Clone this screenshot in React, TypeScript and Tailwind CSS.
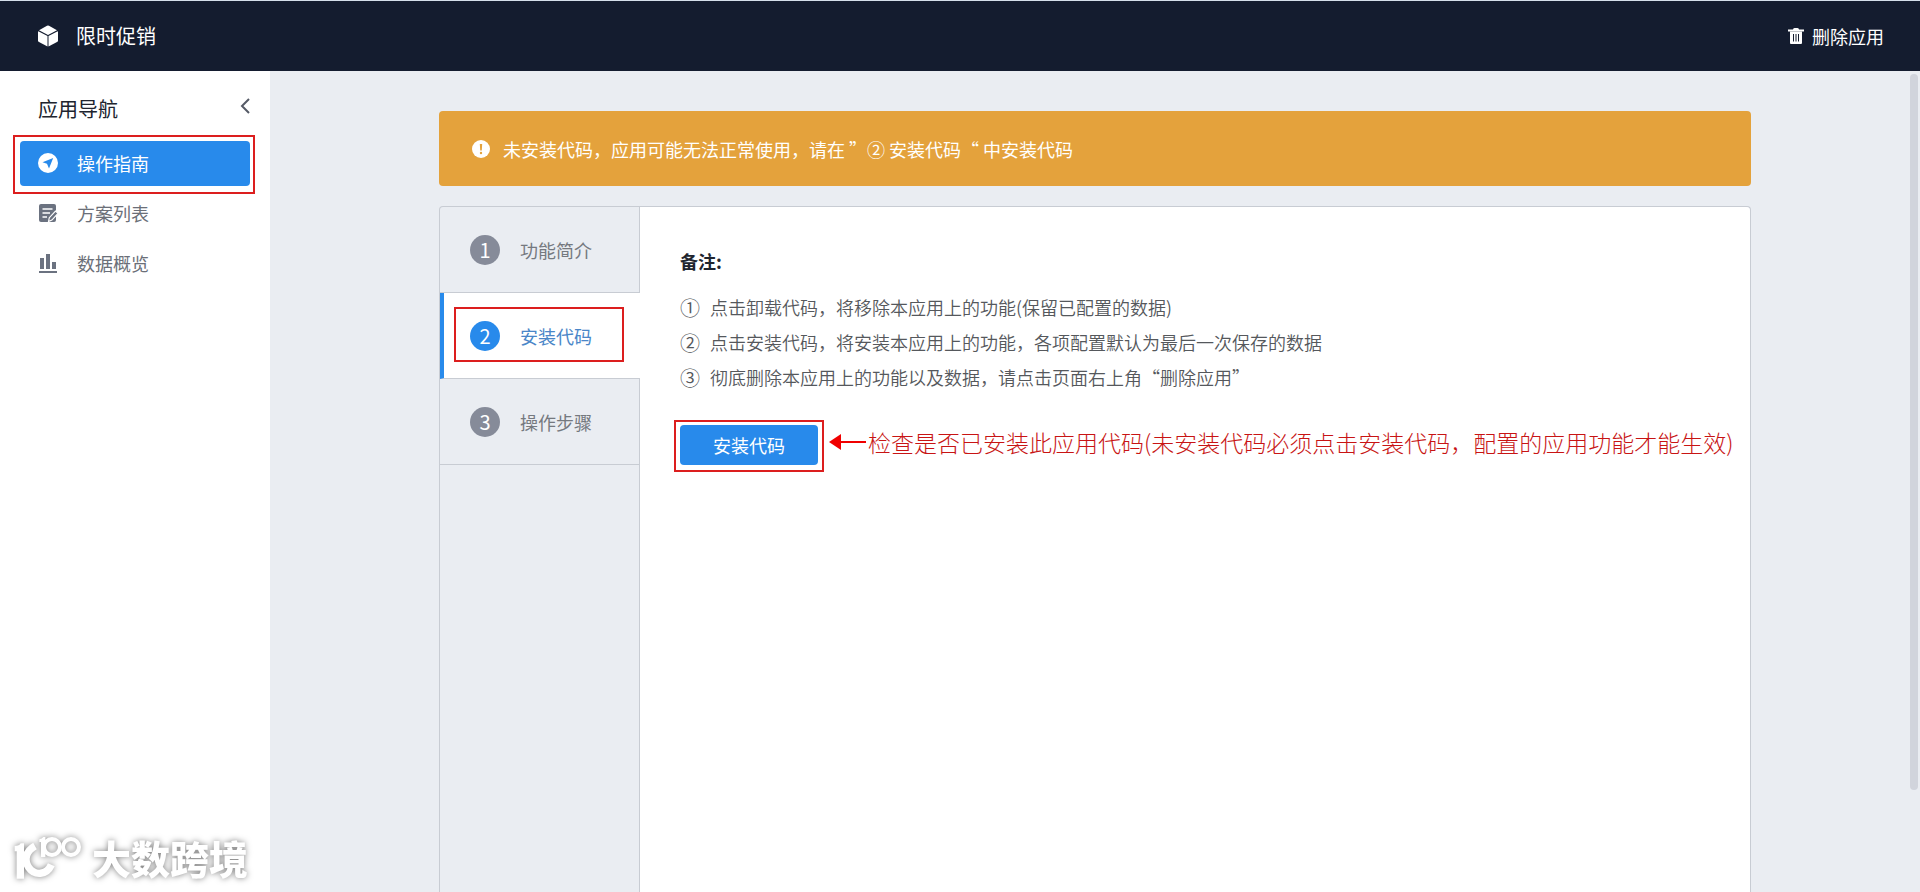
import React from "react";

type NavItem = { label: string; icon: React.ReactNode; active?: boolean };

const CubeIcon = () => (
  <svg viewBox="0 0 20 22" className="h-[22px] w-5" fill="currentColor" aria-hidden="true">
    <path d="M9 .8q1-.5 2 0l8 4.400L10 10 1 5.200z" />
    <path d="M.3 6.200 9.500 11.100v10.300L1 17Q0 16.400 0 15.400V7z" />
    <path d="M19.700 6.200 10.500 11.100v10.300L19 17q1-.6 1-1.600V7z" />
  </svg>
);

const TrashIcon = () => (
  <svg viewBox="0 0 16 16" className="size-4" fill="currentColor" aria-hidden="true">
    <path d="M5 1.500Q5 0 6.500 0h3Q11 0 11 1.500h5V3.500H0V1.500z" />
    <path fillRule="evenodd" d="M2 3.500h12V15q0 1-1 1H3q-1 0-1-1zM5 6v7.500h1V6zm2.500 0v7.500h1V6zM10 6v7.500h1V6z" />
  </svg>
);

const GuideIcon = () => (
  <svg viewBox="0 0 20 20" className="size-5" aria-hidden="true">
    <circle cx="10" cy="10" r="10" fill="#fff" />
    <path d="M15.200 5 4.500 9.300l4.500 1.500 2 4.700z" fill="#288aeb" />
  </svg>
);

const ListIcon = () => (
  <svg viewBox="0 0 20 20" className="size-5" aria-hidden="true">
    <path d="M3 1h13q2 0 2 2v14q0 2-2 2H3q-2 0-2-2V3q0-2 2-2z" fill="#6b7280" />
    <path d="M4.500 6h10M4.500 10h7.500M4.500 14h4.500" stroke="#fff" strokeWidth="1.600" />
    <path d="m10.500 18.500.8-3.800 6.200-6.700 2.500 2.400-6.100 6.700z" fill="#6b7280" stroke="#fff" strokeWidth="1.200" />
  </svg>
);

const ChartIcon = () => (
  <svg viewBox="0 0 20 20" className="size-5" fill="#6b7280" aria-hidden="true">
    <path d="M1 18h18v2H1zM2 5h4v11H2zM8 1h4v15H8zM14 9h4v7h-4z" />
  </svg>
);

const nav: NavItem[] = [
  { label: "操作指南", icon: <GuideIcon />, active: true },
  { label: "方案列表", icon: <ListIcon /> },
  { label: "数据概览", icon: <ChartIcon /> },
];

const steps = ["功能简介", "安装代码", "操作步骤"];

const notes = [
  ["①", "点击卸载代码，将移除本应用上的功能(保留已配置的数据)"],
  ["②", "点击安装代码，将安装本应用上的功能，各项配置默认为最后一次保存的数据"],
  ["③", "彻底删除本应用上的功能以及数据，请点击页面右上角“删除应用”"],
];

function Header() {
  return (
    <header className="flex h-[71px] shrink-0 items-center justify-between border-t border-[#d5dfea] bg-[#141c2f] pr-9 pl-[38px] text-white">
      <h1 className="flex items-center gap-[18px] text-xl">
        <CubeIcon />
        限时促销
      </h1>
      <button type="button" className="flex items-center gap-2 text-lg">
        <TrashIcon />
        删除应用
      </button>
    </header>
  );
}

function Sidebar() {
  return (
    <aside className="relative w-[270px] shrink-0 bg-white">
      <div className="flex h-[70px] items-center justify-between pt-[6px] pr-5 pl-[38px]">
        <h2 className="text-xl text-[#20242e]">应用导航</h2>
        <button type="button" aria-label="收起导航" className="pb-[6px]">
          <svg viewBox="0 0 10 16" className="h-4 w-[10px]" fill="none" stroke="#555a66" strokeWidth="2" aria-hidden="true">
            <path d="M9 1 2 8l7 7" />
          </svg>
        </button>
      </div>
      <nav className="flex flex-col gap-[5px] px-5">
        {nav.map((item) => (
          <a
            key={item.label}
            href="#"
            className={
              item.active
                ? "relative flex h-[45px] items-center gap-[19px] rounded bg-[#288aeb] pb-[2px] pl-[18px] text-lg text-white"
                : "flex h-[45px] items-center gap-[19px] pb-[2px] pl-[18px] text-lg text-[#6b6f78]"
            }
          >
            {item.icon}
            {item.label}
            {item.active && (
              <span className="absolute -top-[6px] -right-[5px] -bottom-2 -left-[7px] border-2 border-[#dc1e1e]" />
            )}
          </a>
        ))}
      </nav>
      <Watermark />
    </aside>
  );
}

function Watermark() {
  return (
    <div className="absolute bottom-[6px] left-2 flex items-center drop-shadow-[0_0_3px_rgba(0,0,0,0.5)]">
      <svg viewBox="0 0 252 174" className="h-[58px] w-[84px]" fill="none" stroke="#fff" aria-hidden="true">
        <path d="M20 54q14 0 18-8h10v106H26V70h-6z" fill="#fff" stroke="none" />
        <path d="M81 54C52 70 48 98 62 118C80 144 116 142 130 110" strokeWidth="22" />
        <path d="M94 34q8-1 12-7h6v60h-13V42h-5z" fill="#fff" stroke="none" />
        <circle cx="132" cy="57" r="24" strokeWidth="12" />
        <circle cx="189" cy="57" r="24" strokeWidth="12" />
      </svg>
      <span className="text-[39px] leading-10 font-black text-white">大数跨境</span>
    </div>
  );
}

function Banner() {
  return (
    <div role="alert" className="flex h-[75px] shrink-0 items-center gap-[13px] rounded bg-[#e4a23c] pl-[33px] text-lg text-white">
      <svg viewBox="0 0 18 18" className="size-[18px]" aria-hidden="true">
        <circle cx="9" cy="9" r="9" fill="#fff" />
        <path d="M7.800 4h2.400L9.800 10.500H8.200z" fill="#e4a23c" />
        <circle cx="9" cy="13" r="1.200" fill="#e4a23c" />
      </svg>
      <p>未安装代码，应用可能无法正常使用，请在 ”② 安装代码“ 中安装代码</p>
    </div>
  );
}

function Steps() {
  return (
    <div className="flex w-[200px] shrink-0 flex-col">
      {steps.map((label, i) => {
        const active = i === 1;
        return (
          <button
            key={label}
            type="button"
            className={
              active
                ? "relative flex h-[86px] items-center gap-5 border-b border-l-4 border-b-[#c8ccd3] border-l-[#288aeb] bg-white pl-[26px] text-lg text-[#4a86c8]"
                : "flex h-[86px] items-center gap-5 border-r border-b border-[#c8ccd3] pl-[30px] text-lg text-[#75797f]"
            }
          >
            <span
              className={
                active
                  ? "flex size-[30px] items-center justify-center rounded-full bg-[#288aeb] text-xl text-white"
                  : "flex size-[30px] items-center justify-center rounded-full bg-[#868b99] text-xl text-white"
              }
            >
              {i + 1}
            </span>
            {label}
            {active && (
              <span className="absolute top-[14px] right-4 bottom-4 left-[10px] border-2 border-[#dc1e1e]" />
            )}
          </button>
        );
      })}
      <div className="flex-1 border-r border-[#c8ccd3]" />
    </div>
  );
}

function InstallPanel() {
  return (
    <section className="min-w-0 flex-1 rounded-tr bg-white pt-[37px] pl-10">
      <h3 className="text-lg leading-[35px] font-bold text-[#20242e]">备注:</h3>
      <ul className="mt-[11px] text-lg leading-[35px] font-[350] text-[#55585c]">
        {notes.map(([mark, text]) => (
          <li key={mark} className="flex">
            <span className="w-[30px] shrink-0 text-xl leading-[35px]">{mark}</span>
            {text}
          </li>
        ))}
      </ul>
      <div className="mt-[30px] flex items-center">
        <div className="relative shrink-0">
          <button type="button" className="block h-10 w-[138px] rounded bg-[#288aeb] text-lg text-white">
            安装代码
          </button>
          <span className="pointer-events-none absolute -inset-x-[6px] -top-[5px] -bottom-[7px] border-2 border-[#dc1e1e]" />
        </div>
        <div className="ml-[11px] flex items-center gap-[2px] pb-[6px] whitespace-nowrap text-[#c81414]">
          <svg viewBox="0 0 37 16" className="h-4 w-[37px]" aria-hidden="true">
            <path d="M0 8 12 0v16z" fill="#f00000" />
            <path d="M10 8h27" stroke="#f00000" strokeWidth="2" />
          </svg>
          <p className="text-[23px] leading-8 font-light">
            检查是否已安装此应用代码(未安装代码必须点击安装代码，配置的应用功能才能生效)
          </p>
        </div>
      </div>
    </section>
  );
}

export default function App() {
  return (
    <div className="flex h-screen flex-col overflow-hidden bg-[#eaedf2] font-['Noto_Sans_CJK_SC',sans-serif]">
      <Header />
      <div className="flex min-h-0 flex-1">
        <Sidebar />
        <main className="flex min-w-0 flex-1 flex-col gap-5 pt-10 pr-[159px] pl-[169px]">
          <Banner />
          <div className="flex flex-1 rounded-t border border-b-0 border-[#c8ccd3]">
            <Steps />
            <InstallPanel />
          </div>
        </main>
        <div className="w-[10px] shrink-0 pt-[3px] pr-[2px]">
          <div className="h-[87.500%] rounded-full bg-[#d1d4dc]" />
        </div>
      </div>
    </div>
  );
}
